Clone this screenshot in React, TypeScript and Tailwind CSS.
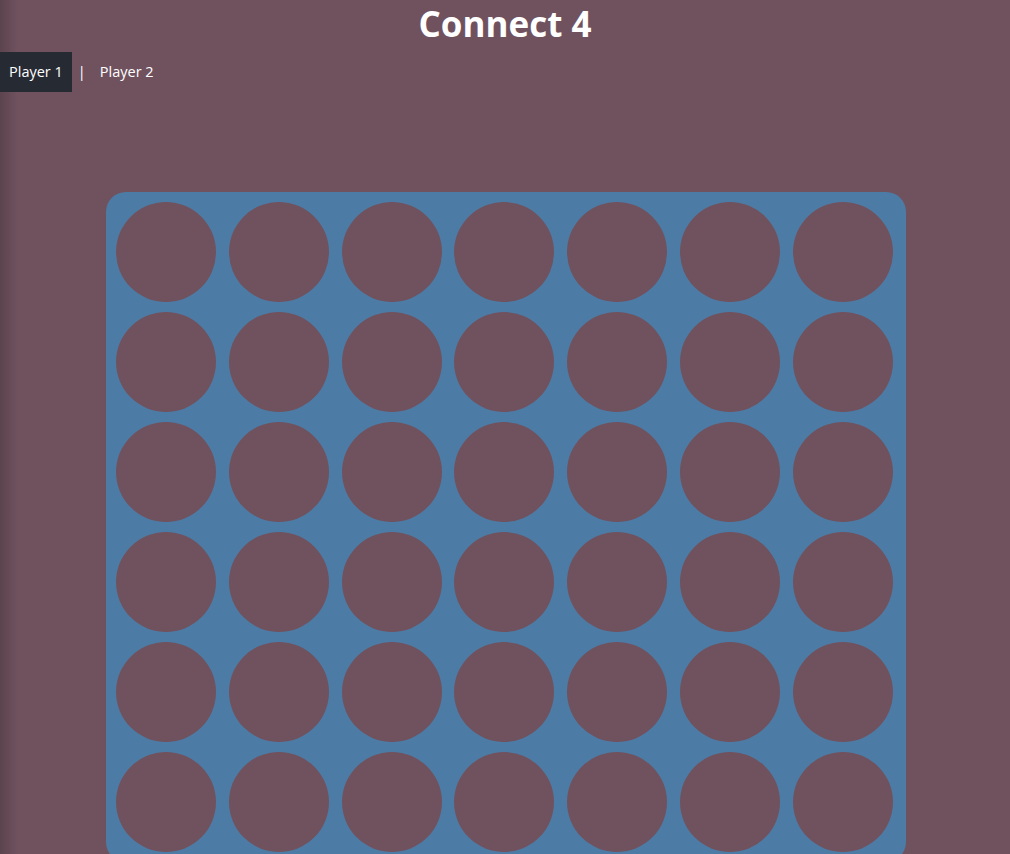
import React from "react";

const ROWS = 6;
const COLS = 7;

function Slot() {
  return <div className="h-[100px] w-[100px] rounded-full bg-[#70525f]" />;
}

export default function App() {
  return (
    <div
      className="min-h-[854px] w-full overflow-hidden bg-[#70525f] text-white"
      style={{ fontFamily: '"Open Sans", "Noto Sans", sans-serif' }}
    >
      <div className="min-h-[854px] bg-[linear-gradient(to_right,rgba(0,0,0,0.18),rgba(0,0,0,0)_18px)]">
        <h1 className="text-center text-[35px] leading-[48px] font-bold">Connect 4</h1>

        {/* player tabs */}
        <div className="mt-[4px] flex h-[40px] items-center text-[14.5px]">
          <div className="flex h-full items-center bg-[#262a33] px-[9px]">Player 1</div>
          <span className="px-[6px]">|</span>
          <div className="flex h-full items-center px-[8px]">Player 2</div>
        </div>

        {/* board */}
        <div className="mt-[100px] flex justify-center pl-[2px]">
          <div className="w-[800px] rounded-[20px] bg-[#4c7ca6] pl-[10px] pr-[13px] pt-[10px] pb-[10px]">
            <div className="flex flex-col gap-[10px]">
              {Array.from({ length: ROWS }).map((_, r) => (
                <div key={r} className="flex justify-between">
                  {Array.from({ length: COLS }).map((_, c) => (
                    <Slot key={c} />
                  ))}
                </div>
              ))}
            </div>
          </div>
        </div>
      </div>
    </div>
  );
}
